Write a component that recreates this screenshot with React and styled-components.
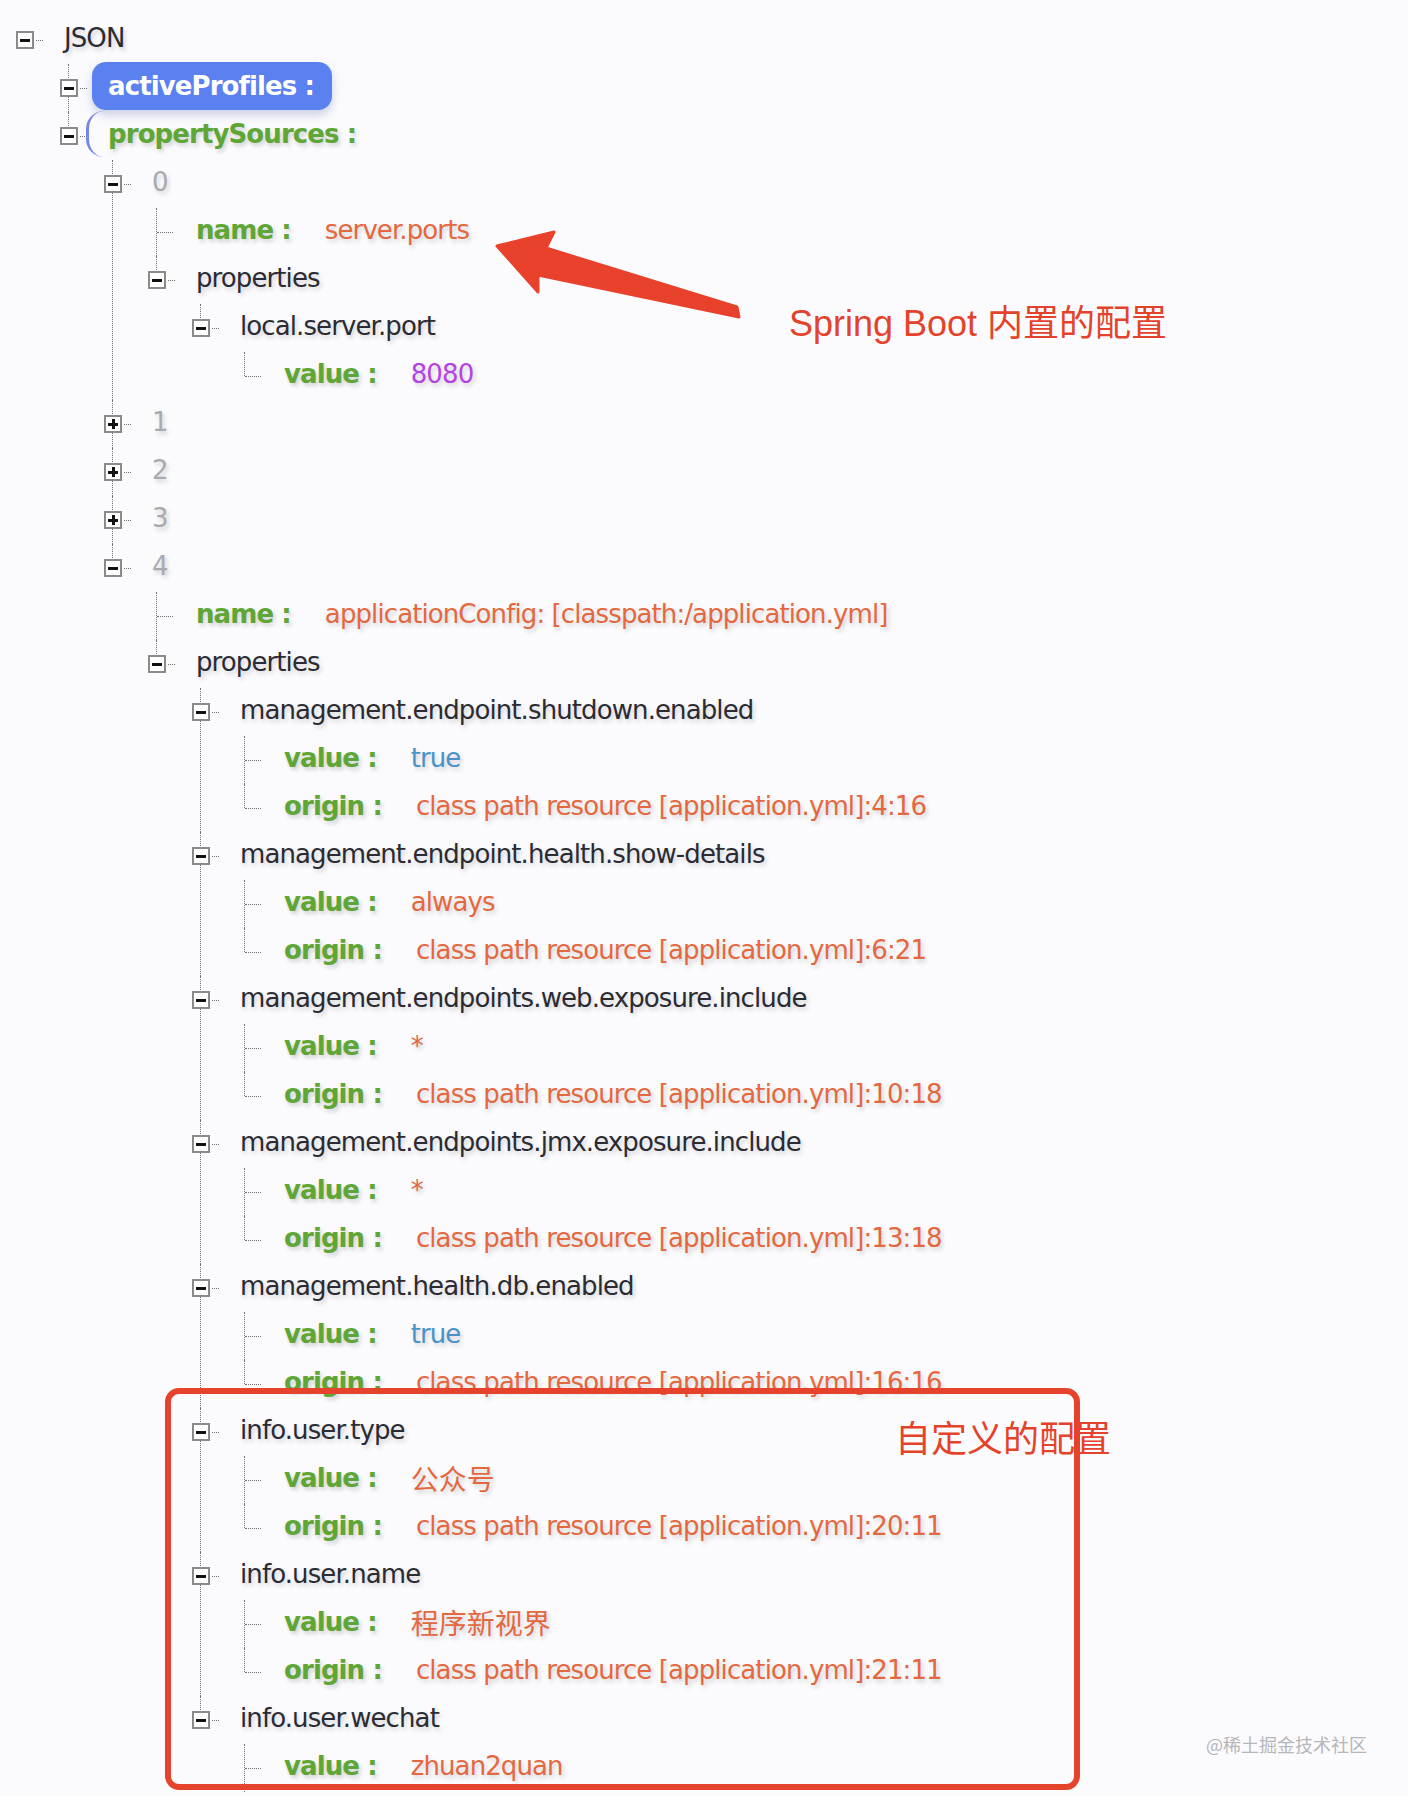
import React from 'react';
import styled, { createGlobalStyle, css } from 'styled-components';

const GlobalStyle = createGlobalStyle`
  html, body {
    margin: 0;
    padding: 0;
    background: #fbfbfd;
  }
  body {
    font-family: "DejaVu Sans", "Noto Sans CJK SC", sans-serif;
  }
`;

const tones = {
  root: '#2b2b33',
  key: '#2b2b33',
  index: '#a9a9b0',
};

const valueColors = {
  string: '#e4683f',
  number: '#b443e3',
  boolean: '#4a93c9',
};

const props = [
  ['management.endpoint.shutdown.enabled', 'true', 'boolean', '4:16'],
  ['management.endpoint.health.show-details', 'always', 'string', '6:21'],
  ['management.endpoints.web.exposure.include', '*', 'string', '10:18'],
  ['management.endpoints.jmx.exposure.include', '*', 'string', '13:18'],
  ['management.health.db.enabled', 'true', 'boolean', '16:16'],
  ['info.user.type', '公众号', 'string', '20:11'],
  ['info.user.name', '程序新视界', 'string', '21:11'],
];

const tree = {
  label: 'JSON',
  tone: 'root',
  children: [
    { label: 'activeProfiles :', variant: 'pill', children: [] },
    {
      label: 'propertySources :',
      variant: 'bracket',
      children: [
        {
          label: '0',
          tone: 'index',
          children: [
            { leaf: 'name :', value: 'server.ports', type: 'string' },
            {
              label: 'properties',
              children: [
                {
                  label: 'local.server.port',
                  children: [{ leaf: 'value :', value: '8080', type: 'number' }],
                },
              ],
            },
          ],
        },
        { label: '1', tone: 'index', collapsed: true },
        { label: '2', tone: 'index', collapsed: true },
        { label: '3', tone: 'index', collapsed: true },
        {
          label: '4',
          tone: 'index',
          children: [
            { leaf: 'name :', value: 'applicationConfig: [classpath:/application.yml]', type: 'string' },
            {
              label: 'properties',
              children: [
                ...props.map(([name, value, type, pos]) => ({
                  label: name,
                  children: [
                    { leaf: 'value :', value, type },
                    { leaf: 'origin :', value: `class path resource [application.yml]:${pos}`, type: 'string' },
                  ],
                })),
                // the origin row of this one sits below the fold, only its line shows
                {
                  label: 'info.user.wechat',
                  more: true,
                  children: [{ leaf: 'value :', value: 'zhuan2quan', type: 'string' }],
                },
              ],
            },
          ],
        },
      ],
    },
  ],
};

const isCjk = (s) => /[\u4e00-\u9fff]/.test(s);

function Node({ node, last, root }) {
  const kids = node.children || [];
  return (
    <Item $root={root} $last={last}>
      <Row>
        <Gutter>
          {node.leaf ? (
            <LeafStub />
          ) : (
            <>
              <Toggle $collapsed={node.collapsed} />
              <Dots />
            </>
          )}
        </Gutter>
        {node.leaf ? (
          <Label>
            <LeafKey>{node.leaf}</LeafKey>
            <Value $type={node.type} $cjk={isCjk(node.value)}>
              {node.value}
            </Value>
          </Label>
        ) : (
          <Label $tone={node.tone}>
            {node.variant === 'pill' && <Pill>{node.label}</Pill>}
            {node.variant === 'bracket' && <Bracket>{node.label}</Bracket>}
            {!node.variant && node.label}
          </Label>
        )}
      </Row>
      {kids.length > 0 && !node.collapsed && (
        <List>
          {kids.map((child, i) => (
            <Node key={i} node={child} last={i === kids.length - 1 && !node.more} />
          ))}
        </List>
      )}
    </Item>
  );
}

function App() {
  return (
    <Page>
      <GlobalStyle />
      <Tree>
        <Node node={tree} root last />
      </Tree>

      <Arrow viewBox="0 0 260 100" width="260" height="100">
        <polygon
          points="7,21 64,7 56,23 247,82 249,92 48,50 48,67"
          fill="#e8412c"
          stroke="#e8412c"
          strokeWidth="3"
          strokeLinejoin="round"
        />
      </Arrow>
      <Note $x={789} $y={306}>Spring Boot 内置的配置</Note>

      <Note $x={895} $y={1422}>自定义的配置</Note>
      <Highlight />

      <Watermark>@稀土掘金技术社区</Watermark>
    </Page>
  );
}

const Page = styled.div`
  position: relative;
  width: 1408px;
  height: 1796px;
  overflow: hidden;
  box-sizing: border-box;
  padding: 16px 0 0 16px;
  background: #fbfbfd;
`;

const List = styled.ul`
  list-style: none;
  margin: 0 0 0 44px;
  padding: 0;
`;

const Tree = styled(List)`
  margin: 0;
`;

const Item = styled.li`
  position: relative;
  &::before {
    content: '';
    display: ${(p) => (p.$root ? 'none' : 'block')};
    position: absolute;
    left: 8px;
    top: 0;
    ${(p) => (p.$last ? 'height: 24px;' : 'bottom: 0;')}
    border-left: 1px dotted #6f6f6f;
  }
`;

const Row = styled.div`
  display: flex;
  align-items: center;
  height: 48px;
`;

const Gutter = styled.span`
  flex: none;
  display: flex;
  align-items: center;
  width: 48px;
  height: 48px;
`;

const Toggle = styled.span`
  position: relative;
  box-sizing: border-box;
  display: flex;
  align-items: center;
  justify-content: center;
  width: 18px;
  height: 18px;
  border: 2px solid #8a8a8a;
  background: #fff;
  &::before {
    content: '';
    width: 10px;
    height: 3px;
    background: #111;
  }
  ${(p) =>
    p.$collapsed &&
    css`
      &::after {
        content: '';
        position: absolute;
        width: 3px;
        height: 10px;
        background: #111;
      }
    `}
`;

const Dots = styled.span`
  width: 7px;
  margin-left: 2px;
  border-top: 1px dotted #6f6f6f;
`;

const LeafStub = styled.span`
  width: 16px;
  margin-left: 9px;
  border-top: 1px dotted #6f6f6f;
`;

const Label = styled.span`
  display: inline-flex;
  align-items: center;
  padding-bottom: 5px;
  font-size: 26px;
  letter-spacing: -0.9px;
  white-space: nowrap;
  color: ${(p) => tones[p.$tone] || tones.key};
  text-shadow: 2px 3px 4px rgba(0, 0, 0, 0.17);
`;

const Pill = styled.span`
  display: inline-flex;
  align-items: center;
  box-sizing: border-box;
  height: 48px;
  margin-left: -16px;
  padding: 0 18px 0 16px;
  border-radius: 14px;
  background: #5b80ef;
  color: #fff;
  font-weight: bold;
  text-shadow: none;
  box-shadow: 0 5px 10px rgba(60, 80, 160, 0.25);
`;

const Bracket = styled.span`
  display: inline-flex;
  align-items: center;
  box-sizing: border-box;
  height: 46px;
  margin-left: -22px;
  padding-left: 19px;
  border-left: 3px solid #7487e4;
  border-radius: 18px 0 0 18px;
  color: #5ea635;
  font-weight: bold;
`;

const LeafKey = styled.span`
  color: #5ea635;
  font-weight: bold;
`;

const Value = styled.span`
  margin-left: 34px;
  color: ${(p) => valueColors[p.$type]};
  ${(p) =>
    p.$cjk &&
    css`
      font-size: 28px;
      letter-spacing: 0;
    `}
`;

const Arrow = styled.svg`
  position: absolute;
  left: 490px;
  top: 225px;
  overflow: visible;
`;

const Note = styled.div`
  position: absolute;
  left: ${(p) => p.$x}px;
  top: ${(p) => p.$y}px;
  font-family: "Liberation Sans", "Noto Sans CJK SC", sans-serif;
  font-size: 36px;
  line-height: 36px;
  color: #e4432b;
  white-space: nowrap;
`;

const Highlight = styled.div`
  position: absolute;
  left: 165px;
  top: 1388px;
  width: 915px;
  height: 402px;
  box-sizing: border-box;
  border: 6px solid #e5432c;
  border-radius: 14px;
`;

const Watermark = styled.div`
  position: absolute;
  left: 1206px;
  top: 1732px;
  font-family: "Noto Sans CJK SC", sans-serif;
  font-size: 18px;
  line-height: 24px;
  color: #b5b5ba;
  white-space: nowrap;
`;

export default App;
